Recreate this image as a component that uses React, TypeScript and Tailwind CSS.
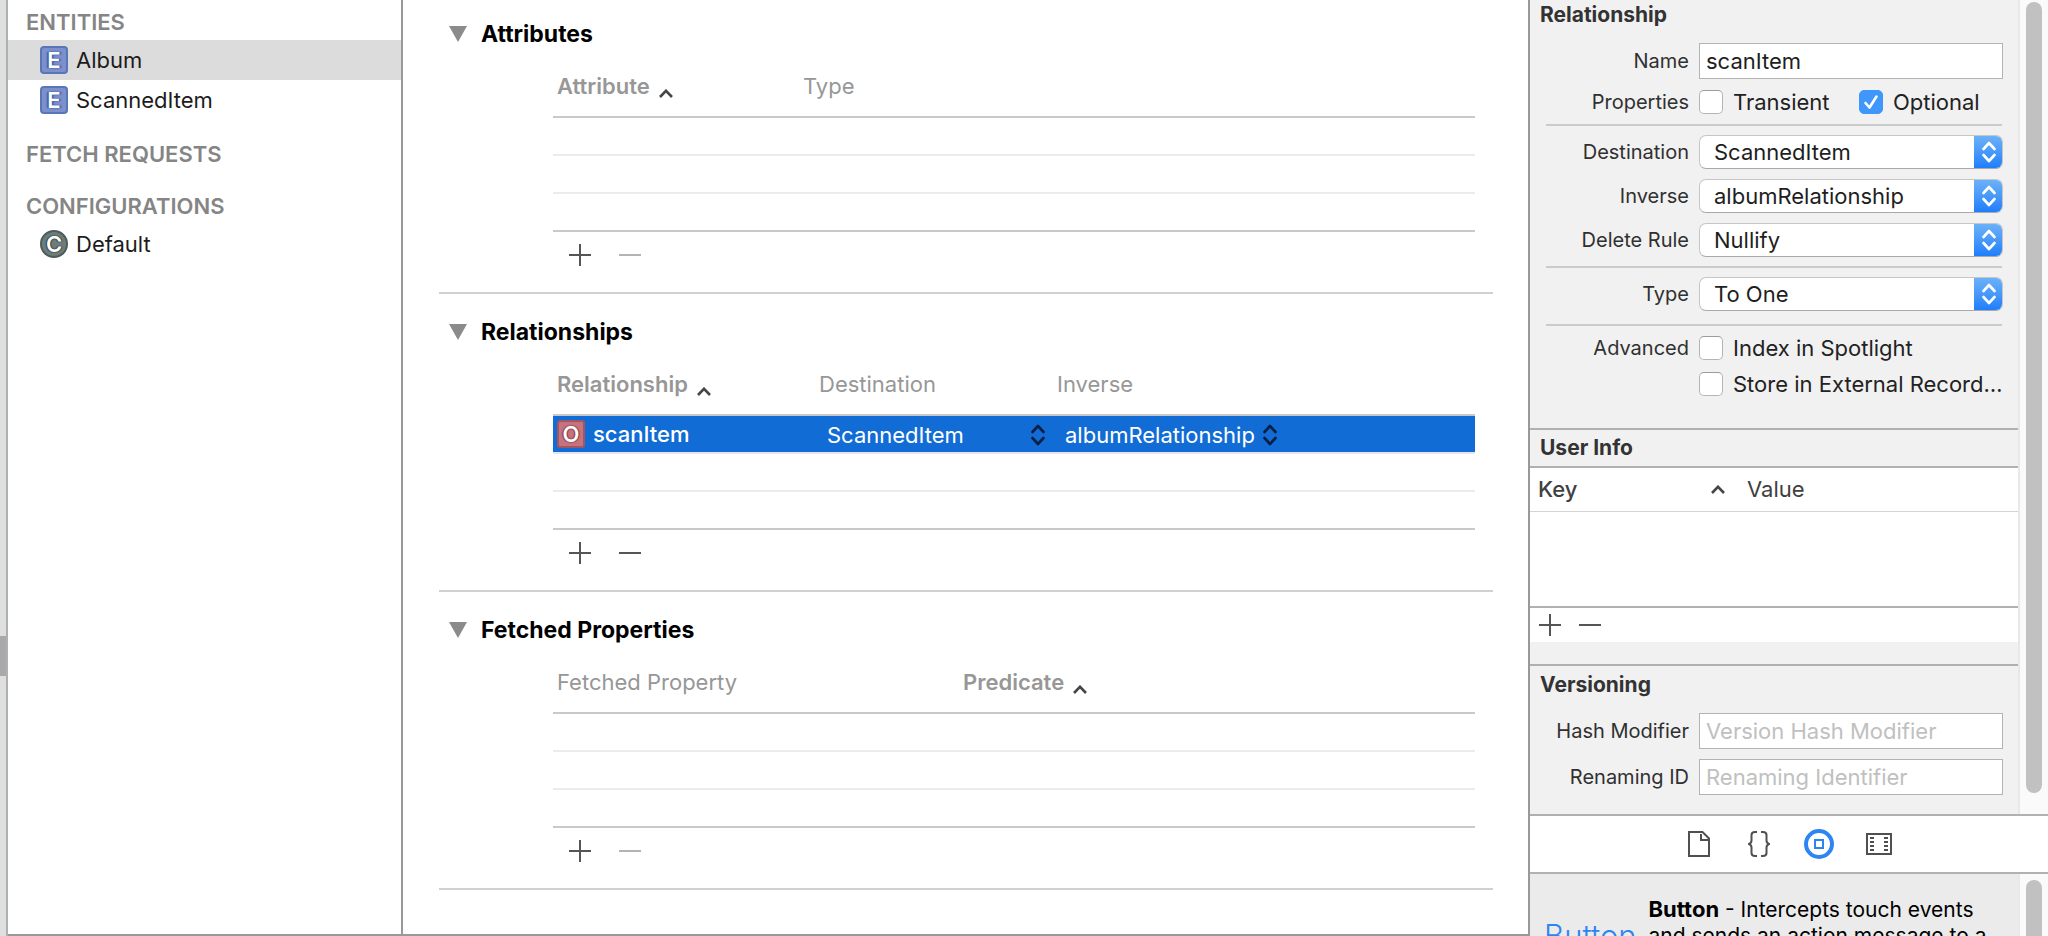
import type { ReactNode } from "react";
import { clsx } from "clsx";

interface Column {
  label: string;
  width?: string;
  sorted?: boolean;
}

interface PropertySectionProps {
  title: string;
  columns: Column[];
  canRemove?: boolean;
  children?: ReactNode;
}

function Caret({ className }: { className?: string }) {
  return (
    <svg viewBox="0 0 14 9" className={clsx("h-[9px] w-[14px] shrink-0", className)} fill="none" stroke="#454545" strokeWidth="2.6">
      <path d="M1 8 L7 1.8 L13 8" />
    </svg>
  );
}

function UpDown({ className }: { className?: string }) {
  return (
    <svg viewBox="0 0 14 22" className={clsx("h-[22px] w-[14px]", className)} fill="none" stroke="currentColor" strokeWidth="2.6" strokeLinecap="round" strokeLinejoin="round">
      <path d="M1.5 8 L7 2 L12.500 8" />
      <path d="M1.5 14 L7 20 L12.500 14" />
    </svg>
  );
}

function PlusMinus({ canRemove = true, className }: { canRemove?: boolean; className?: string }) {
  return (
    <div className={clsx("flex items-center", className)}>
      <button type="button" aria-label="Add">
        <svg viewBox="0 0 22 22" className="size-[22px]" stroke="#555" strokeWidth="2">
          <path d="M0 11 H22 M11 0 V22" />
        </svg>
      </button>
      <button type="button" aria-label="Remove" disabled={!canRemove}>
        <svg viewBox="0 0 22 22" className="size-[22px]" stroke={canRemove ? "#555" : "#b4b4b4"} strokeWidth="2">
          <path d="M0 11 H22" />
        </svg>
      </button>
    </div>
  );
}

function EntityBadge() {
  return (
    <span className="flex size-7 items-center justify-center rounded-[4px] border-2 border-[#5876b8] bg-[#7c90cc] text-[22px] leading-none font-semibold text-white [text-shadow:0_0_2px_#3f5ca8,2px_0_1px_#4a66ae,-2px_0_1px_#4a66ae]">
      E
    </span>
  );
}

/* Sidebar */

function SidebarItem({ label, badge, selected }: { label: string; badge: ReactNode; selected?: boolean }) {
  return (
    <li>
      <button
        type="button"
        className={clsx("flex h-10 w-full items-center gap-2 pl-8 text-[22px] text-[#1c1c1c]", selected && "bg-[#dcdcdc]")}
      >
        {badge}
        {label}
      </button>
    </li>
  );
}

function Sidebar() {
  return (
    <nav className="w-[395px] shrink-0 border-r-2 border-b-2 border-[#999] bg-white">
      <h2 className="flex h-10 items-center pt-1 pl-[18px] text-[22px] font-semibold text-[#858585]">ENTITIES</h2>
      <ul>
        <SidebarItem label="Album" badge={<EntityBadge />} selected />
        <SidebarItem label="ScannedItem" badge={<EntityBadge />} />
      </ul>
      <h2 className="flex h-[68px] items-center pl-[18px] text-[22px] font-semibold text-[#858585]">FETCH REQUESTS</h2>
      <h2 className="flex h-9 items-center pl-[18px] text-[22px] font-semibold text-[#858585]">CONFIGURATIONS</h2>
      <ul>
        <SidebarItem
          label="Default"
          badge={
            <span className="flex size-7 items-center justify-center rounded-full border-2 border-[#4c5c5b] bg-[#6e7d7b] text-[22px] leading-none font-semibold text-white [text-shadow:0_0_2px_#34403f,1px_0_1px_#34403f,-1px_0_1px_#34403f]">
              C
            </span>
          }
        />
      </ul>
    </nav>
  );
}

/* Model editor */

function PropertySection({ title, columns, canRemove = false, children }: PropertySectionProps) {
  const emptyRows = children ? 2 : 3;
  return (
    <section className="border-b-2 border-[#d0d0d0] pt-2 first:pt-1">
      <h2 className="flex h-[60px] items-center">
        <button type="button" className="flex items-center gap-[14px] pl-[10px] text-[23px] font-bold text-black">
          <svg viewBox="0 0 18 16" className="h-4 w-[18px]" fill="#8b8b8b">
            <path d="M0 0 H18 L9 16 Z" />
          </svg>
          {title}
        </button>
      </h2>
      <div className="pr-[18px] pl-[114px]">
        <table className="w-full table-fixed border-separate border-spacing-0 text-left text-[22px]">
          <thead>
            <tr>
              {columns.map((col) => (
                <th
                  key={col.label}
                  scope="col"
                  className={clsx(
                    "h-[54px] border-b-2 border-[#c9c9c9] pb-2 pl-1 align-middle text-[#979797]",
                    col.sorted ? "font-semibold" : "font-normal",
                    col.width,
                  )}
                >
                  <span className="flex items-center gap-[9px]">
                    {col.label}
                    {col.sorted && <Caret className="mt-[14px]" />}
                  </span>
                </th>
              ))}
            </tr>
          </thead>
          <tbody>
            {children}
            {Array.from({ length: emptyRows }, (_, i) => (
              <tr key={i}>
                <td
                  colSpan={columns.length}
                  className={clsx("h-[38px] border-b-2", i === emptyRows - 1 ? "border-[#c9c9c9]" : "border-[#ebebeb]")}
                />
              </tr>
            ))}
          </tbody>
        </table>
        <PlusMinus canRemove={canRemove} className="mb-[14px] h-[46px] gap-7 pl-4" />
      </div>
    </section>
  );
}

function CellSelect({ label, value, className }: { label: string; value: string; className?: string }) {
  return (
    <div className={clsx("relative flex items-center text-[#0b1f45]", className)}>
      <select aria-label={label} defaultValue={value} className="h-[34px] w-full appearance-none bg-transparent pl-3 text-white outline-none">
        <option>{value}</option>
      </select>
      <UpDown className="pointer-events-none absolute right-2" />
    </div>
  );
}

function ModelEditor() {
  return (
    <main className="min-w-0 flex-1 border-b-2 border-[#999] bg-white pr-[35px] pl-9">
      <PropertySection
        title="Attributes"
        columns={[{ label: "Attribute", width: "w-[246px]", sorted: true }, { label: "Type" }]}
      />
      <PropertySection
        title="Relationships"
        canRemove
        columns={[
          { label: "Relationship", width: "w-[262px]", sorted: true },
          { label: "Destination", width: "w-[238px]" },
          { label: "Inverse" },
        ]}
      >
        <tr className="bg-[#126cd6] text-white">
          <td className="h-[38px] border-b-2 border-[#e4e6f2] bg-clip-padding p-0 pl-1">
            <span className="flex items-center gap-2 font-medium">
              <span className="flex size-7 items-center justify-center rounded-[3px] border-2 border-[#a4555f] bg-[#c4747e] text-[22px] leading-none font-semibold [text-shadow:0_0_2px_#8d3340,1px_0_1px_#8d3340,-1px_0_1px_#8d3340]">
                O
              </span>
              scanItem
            </span>
          </td>
          <td className="h-[38px] border-b-2 border-[#e4e6f2] p-0 pt-[2px]">
            <CellSelect label="Destination" value="ScannedItem" />
          </td>
          <td className="h-[38px] border-b-2 border-[#e4e6f2] p-0 pt-[2px]">
            <CellSelect label="Inverse" value="albumRelationship" className="w-[232px]" />
          </td>
        </tr>
      </PropertySection>
      <PropertySection
        title="Fetched Properties"
        columns={[
          { label: "Fetched Property", width: "w-[406px]" },
          { label: "Predicate", sorted: true },
        ]}
      />
    </main>
  );
}

/* Inspector */

function Row({ label, htmlFor, children }: { label: string; htmlFor?: string; children: ReactNode }) {
  const labelClass = "w-[159px] shrink-0 text-right text-[20px] leading-6 text-[#303030]";
  return (
    <div className="flex items-center gap-[10px] pr-[15px]">
      {htmlFor ? (
        <label htmlFor={htmlFor} className={labelClass}>
          {label}
        </label>
      ) : (
        <span className={labelClass}>{label}</span>
      )}
      {children}
    </div>
  );
}

function TextField({ id, value, placeholder }: { id: string; value?: string; placeholder?: string }) {
  return (
    <input
      id={id}
      type="text"
      defaultValue={value}
      placeholder={placeholder}
      className="h-9 min-w-0 flex-1 border border-[#b3b3b3] bg-white px-[6px] text-[22px] text-[#1e1e1e] outline-none placeholder:text-[#c0c0c0]"
    />
  );
}

function Popup({ id, value }: { id: string; value: string }) {
  return (
    <div className="relative flex h-[34px] min-w-0 flex-1 overflow-hidden rounded-[7px] border border-[#c6c6c6] border-b-[#a9a9a9] bg-white">
      <select id={id} defaultValue={value} className="w-full appearance-none bg-transparent pl-[14px] text-[22px] text-[#1e1e1e] outline-none">
        <option>{value}</option>
      </select>
      <span className="pointer-events-none absolute -inset-y-px -right-px flex w-[29px] items-center justify-center bg-linear-to-b from-[#6db3f8] to-[#1a7cfb] text-white">
        <UpDown />
      </span>
    </div>
  );
}

function Check({ label, checked, className }: { label: string; checked?: boolean; className?: string }) {
  return (
    <label className={clsx("flex items-center gap-[10px] text-[22px] leading-6 whitespace-nowrap text-[#222]", className)}>
      <span className="relative flex">
        <input
          type="checkbox"
          defaultChecked={checked}
          className="peer size-6 appearance-none rounded-[5px] border border-[#b5b5b5] border-t-[#9c9c9c] bg-white checked:border-[#3f97fb] checked:bg-[#3f97fb]"
        />
        <svg viewBox="0 0 24 24" className="pointer-events-none absolute inset-0 hidden size-6 peer-checked:block" fill="none" stroke="white" strokeWidth="2.6" strokeLinecap="round" strokeLinejoin="round">
          <path d="M6.500 13 L10.500 17.500 L17.500 6.500" />
        </svg>
      </span>
      {label}
    </label>
  );
}

function Divider() {
  return <hr className="mr-4 ml-4 border-t-2 border-[#cbcbcb]" />;
}

function Scroller({ children, className }: { children: ReactNode; className?: string }) {
  return <div className={clsx("w-[30px] shrink-0 border-l-2 border-[#e8e8e8] bg-[#fafafa] px-[6px]", className)}>{children}</div>;
}

function Inspector() {
  return (
    <aside className="flex w-[520px] shrink-0 flex-col border-l-2 border-[#999] bg-[#f1f1f1]">
      <div className="flex border-b-2 border-[#b1b1b1]">
        <div className="min-w-0 flex-1">
          <h2 className="flex h-[30px] items-center pl-[10px] text-[21px] font-bold text-[#333]">Relationship</h2>
          <div className="border-b-2 border-[#b1b1b1] pt-[13px] pb-8">
            <Row label="Name" htmlFor="name">
              <TextField id="name" value="scanItem" />
            </Row>
            <div className="pt-[11px] pb-[10px]">
              <Row label="Properties">
                <Check label="Transient" className="w-[150px]" />
                <Check label="Optional" checked />
              </Row>
            </div>
            <Divider />
            <div className="flex flex-col gap-[10px] py-[9px]">
              <Row label="Destination" htmlFor="destination">
                <Popup id="destination" value="ScannedItem" />
              </Row>
              <Row label="Inverse" htmlFor="inverse">
                <Popup id="inverse" value="albumRelationship" />
              </Row>
              <Row label="Delete Rule" htmlFor="delete-rule">
                <Popup id="delete-rule" value="Nullify" />
              </Row>
            </div>
            <Divider />
            <div className="pt-[9px] pb-[13px]">
              <Row label="Type" htmlFor="type">
                <Popup id="type" value="To One" />
              </Row>
            </div>
            <Divider />
            <div className="flex flex-col gap-3 pt-[10px]">
              <Row label="Advanced">
                <Check label="Index in Spotlight" />
              </Row>
              <Row label="">
                <Check label="Store in External Record…" />
              </Row>
            </div>
          </div>

          <h2 className="flex h-[38px] items-center border-b-2 border-[#b1b1b1] pl-[10px] text-[21px] font-bold text-[#333]">
            User Info
          </h2>
          <div className="bg-white">
            <table className="w-full table-fixed border-separate border-spacing-0 text-left text-[22px] text-[#404040]">
              <thead>
                <tr>
                  <th scope="col" className="h-11 w-[213px] border-b border-[#d4d4d4] p-0 pl-2 font-medium">
                    <span className="flex items-center justify-between pr-[18px]">
                      Key
                      <Caret />
                    </span>
                  </th>
                  <th scope="col" className="h-11 border-b border-[#d4d4d4] p-0 pl-1 font-normal">
                    Value
                  </th>
                </tr>
              </thead>
              <tbody>
                <tr>
                  <td colSpan={2} className="h-24 border-b-2 border-[#b1b1b1]" />
                </tr>
              </tbody>
            </table>
            <PlusMinus className="h-[34px] gap-[18px] pl-[9px]" />
          </div>

          <h2 className="mt-[22px] flex h-[49px] items-center border-t-2 border-[#b1b1b1] pb-[9px] pl-[10px] text-[21px] font-bold text-[#333]">
            Versioning
          </h2>
          <div className="flex flex-col gap-[10px] pb-[19px]">
            <Row label="Hash Modifier" htmlFor="hash">
              <TextField id="hash" placeholder="Version Hash Modifier" />
            </Row>
            <Row label="Renaming ID" htmlFor="renaming">
              <TextField id="renaming" placeholder="Renaming Identifier" />
            </Row>
          </div>
        </div>
        <Scroller className="flex flex-col pt-[2px] pb-[21px]">
          <div className="flex-1 rounded-full bg-[#c1c1c1]" />
        </Scroller>
      </div>

      <div className="flex h-[58px] shrink-0 items-center justify-center border-b-2 border-[#b1b1b1] bg-white">
        <button type="button" aria-label="File templates" className="flex w-[60px] justify-center">
          <svg viewBox="0 0 22 26" className="h-[26px] w-[22px]" fill="none" stroke="#505050" strokeWidth="2">
            <path d="M1 1 H14.500 L21 7.500 V25 H1 Z" />
            <path d="M13 3 V9 H20" />
          </svg>
        </button>
        <button type="button" aria-label="Code snippets" className="flex w-[60px] justify-center">
          <svg viewBox="0 0 22 26" className="h-[26px] w-[22px]" fill="none" stroke="#505050" strokeWidth="2">
            <path d="M9 1 H7 Q3.500 1 3.500 4 V9.500 Q3.500 12 1 13 Q3.500 14 3.500 16.500 V22 Q3.500 25 7 25 H9" />
            <path d="M13 1 H15 Q18.500 1 18.500 4 V9.500 Q18.500 12 21 13 Q18.500 14 18.500 16.500 V22 Q18.500 25 15 25 H13" />
          </svg>
        </button>
        <button type="button" aria-label="Objects" className="flex w-[60px] justify-center">
          <svg viewBox="0 0 30 30" className="size-[30px]" fill="none" stroke="#2d85f3">
            <circle cx="15" cy="15" r="13" strokeWidth="4" />
            <rect x="11" y="11" width="8" height="8" strokeWidth="2" />
          </svg>
        </button>
        <button type="button" aria-label="Media" className="flex w-[60px] justify-center">
          <svg viewBox="0 0 26 22" className="h-[22px] w-[26px]" fill="none" stroke="#505050" strokeWidth="2">
            <rect x="1" y="1" width="24" height="20" />
            <path d="M6 4 V19 M20 4 V19" strokeWidth="4" strokeDasharray="2 2" />
          </svg>
        </button>
      </div>

      <div className="flex min-h-0 flex-1 overflow-hidden bg-[#ebebeb]">
        <div className="flex min-w-0 flex-1 gap-3 pt-[23px] pl-[14px]">
          <span className="shrink-0 pt-[21px] text-[31px] leading-[36px] font-light text-[#2d85f3]">Button</span>
          <p className="text-[21px] leading-[26px] whitespace-nowrap text-black">
            <strong className="text-[22px] leading-none font-bold">Button</strong> - Intercepts touch events
            <br />
            and sends an action message to a
          </p>
        </div>
        <Scroller className="pt-[6px]">
          <div className="h-40 rounded-full bg-[#c1c1c1]" />
        </Scroller>
      </div>
    </aside>
  );
}

export default function App() {
  return (
    <div className="flex h-screen min-h-0 overflow-hidden bg-white font-['Inter',sans-serif]">
      <div className="flex w-2 shrink-0 flex-col justify-center border-r-2 border-[#b0b0b0] bg-[#dedfdf] pt-[376px]">
        <div className="h-10 bg-[#a9a9ab]" />
      </div>
      <Sidebar />
      <ModelEditor />
      <Inspector />
    </div>
  );
}
